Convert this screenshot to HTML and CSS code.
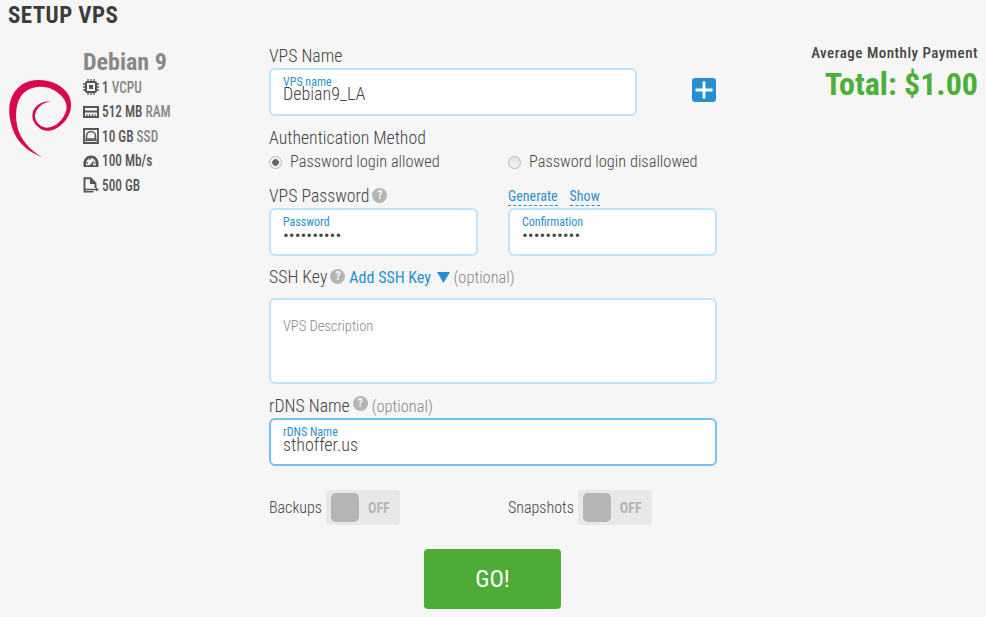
FILE: index.html
```html
<!DOCTYPE html>
<html lang="en">
<head>
  <meta charset="UTF-8" />
  <title>Setup VPS</title>
  <link rel="stylesheet" href="styles.css">
</head>
<body>
  <h1 class="page-title">SETUP VPS</h1>
  <div class="setup">
    <div class="os">
      <svg class="os-logo" viewBox="0 0 210 264" width="70" height="88">
        <path fill="#d70751" d="M112 246C80 236 45 212 28 175C12 135 6 95 22 62C38 32 65 15 100 15C140 15 175 32 192 62C204 88 198 118 178 140C160 160 140 170 122 167C100 162 82 142 82 122C82 98 105 78 135 80C115 82 92 98 90 122C90 142 108 158 128 158C152 156 176 135 184 105C190 78 165 50 130 38C100 30 70 38 52 58C34 80 30 115 36 150C44 195 80 230 112 246Z"/>
      </svg>
      <div class="os-info">
        <div class="os-name">Debian 9</div>
        <ul class="specs">
          <li>
            <svg class="spec-icon" viewBox="0 0 16 16"><rect x="3" y="3" width="10" height="10" rx="1" fill="none" stroke="#555" stroke-width="2"/><rect x="6" y="6" width="4" height="4" fill="#555"/><path d="M5 0v3M8 0v3M11 0v3M5 13v3M8 13v3M11 13v3M0 5h3M0 8h3M0 11h3M13 5h3M13 8h3M13 11h3" stroke="#555" stroke-width="1.300"/></svg>
            <span class="spec-text">1 <em>VCPU</em></span>
          </li>
          <li>
            <svg class="spec-icon" viewBox="0 0 16 16"><path d="M1 3h14v10H1z" fill="none" stroke="#555" stroke-width="2"/><path d="M1 7.500h14" stroke="#555" stroke-width="2"/><path d="M4 10v3M6.700 10v3M9.400 10v3M12 10v3" stroke="#555" stroke-width="1.100"/></svg>
            <span class="spec-text">512 MB <em>RAM</em></span>
          </li>
          <li>
            <svg class="spec-icon" viewBox="0 0 16 16"><path d="M1 1h14v14H1z" fill="none" stroke="#555" stroke-width="1.800"/><path d="M3.500 11V8a4.500 4.500 0 0 1 9 0v3z" fill="none" stroke="#555" stroke-width="1.500"/><path d="M1 12.300h14" stroke="#555" stroke-width="1.500"/></svg>
            <span class="spec-text">10 GB <em>SSD</em></span>
          </li>
          <li>
            <svg class="spec-icon" viewBox="0 0 16 16"><path d="M.8 14C-1 7.500 3 2.500 8 2.500S17 7.500 15.200 14z" fill="#555"/><path d="M3 12.300C2.800 8 5 5 8 5s5.200 3 5 7.300z" fill="#f6f6f6"/><path d="M5.500 14L11 7l-1.500 7z" fill="#555"/><path d="M3.500 9.500l1.500 1M12.500 9.500l-1.500 1M7 5v2" stroke="#555" stroke-width="1.300"/></svg>
            <span class="spec-text">100 Mb/s</span>
          </li>
          <li>
            <svg class="spec-icon" viewBox="0 0 16 16"><path d="M1.500 15.500V1.200h6l5 5V11" fill="none" stroke="#555" stroke-width="1.900"/><path d="M7 1v6h6z" fill="#555"/><path d="M1.500 12.500h12M1.500 14.800h9" stroke="#555" stroke-width="1.600"/><path d="M13 10.500l3 2-3 2z" fill="#555"/></svg>
            <span class="spec-text">500 GB</span>
          </li>
        </ul>
      </div>
    </div>

    <form class="vps-form">
      <div class="form-label">VPS Name</div>
      <div class="name-row">
        <label class="field field-name">
          <span class="field-label">VPS name</span>
          <input type="text" value="Debian9_LA">
        </label>
        <button type="button" class="add-btn" aria-label="Add">
          <svg viewBox="0 0 24 24" width="24" height="24"><path d="M12 3.500v17M3.500 12h17" stroke="#fff" stroke-width="2.800"/></svg>
        </button>
      </div>

      <div class="form-label auth-label">Authentication Method</div>
      <div class="two-col radios">
        <label class="radio"><span class="radio-dot checked"></span>Password login allowed</label>
        <label class="radio"><span class="radio-dot"></span>Password login disallowed</label>
      </div>

      <div class="two-col pass-head">
        <div class="form-label">VPS Password <span class="help">?</span></div>
        <div class="pass-links"><a href="#">Generate</a><a href="#">Show</a></div>
      </div>
      <div class="two-col">
        <label class="field">
          <span class="field-label">Password</span>
          <input type="password" value="1234567890">
        </label>
        <label class="field">
          <span class="field-label">Confirmation</span>
          <input type="password" value="1234567890">
        </label>
      </div>

      <div class="form-label ssh-label">SSH Key <span class="help">?</span> <a href="#" class="add-key">Add SSH Key <svg class="arrow" viewBox="0 0 13 11" width="13" height="11"><path d="M0 0h13L6.500 11z" fill="#2490d2"/></svg></a> <span class="optional">(optional)</span></div>
      <div class="description">VPS Description</div>

      <div class="form-label rdns-label">rDNS Name <span class="help help-raised">?</span> <span class="optional">(optional)</span></div>
      <label class="field field-focus">
        <span class="field-label">rDNS Name</span>
        <input type="text" value="sthoffer.us">
      </label>

      <div class="two-col toggles">
        <div class="toggle-row">Backups <span class="toggle"><span class="knob"></span><span class="off">OFF</span></span></div>
        <div class="toggle-row">Snapshots <span class="toggle"><span class="knob"></span><span class="off">OFF</span></span></div>
      </div>

      <div class="go-row"><button type="button" class="go-btn">GO!</button></div>
    </form>

    <div class="price">
      <div class="price-label">Average Monthly Payment</div>
      <div class="price-total">Total: $1.00</div>
    </div>
  </div>
</body>
</html>
```

FILE: styles.css
```css
* {
  box-sizing: border-box;
}
body {
  margin: 0;
  padding: 0 8px;
  height: 617px;
  overflow: hidden;
  background-color: #f6f6f6;
  color: #444;
  font-family: Roboto, sans-serif;
  font-stretch: 75%;
}
.page-title {
  margin: 0;
  padding-top: 3px;
  font-size: 23px;
  line-height: 26px;
  letter-spacing: 0.4px;
  font-weight: 700;
  color: #3c3c3c;
}
.setup {
  display: flex;
  margin-top: 18px;
}
.os {
  display: flex;
  width: 261px;
  flex: none;
}
.os-logo {
  margin: 28px 8px 0 -3px;
  flex: none;
}
.os-info {
  padding-top: 2px;
}
.os-name {
  font-size: 24px;
  line-height: 26px;
  font-weight: 700;
  color: #888;
}
.specs {
  list-style: none;
  margin: 0;
  padding: 0;
}
.specs li {
  display: flex;
  align-items: center;
  gap: 3px;
  height: 24.5px;
  font-size: 16px;
  font-weight: 500;
  color: #555;
}
.spec-text {
  white-space: nowrap;
  transform: scaleX(0.83);
  transform-origin: left center;
}
.specs em {
  font-style: normal;
  color: #888;
}
.spec-icon {
  width: 16px;
  height: 16px;
  flex: none;
}
.vps-form {
  width: 448px;
  flex: none;
  margin-top: -1px;
}
.form-label {
  font-size: 17.800px;
  line-height: 20px;
  font-weight: 300;
  color: #444;
}
.name-row {
  display: flex;
  justify-content: space-between;
  align-items: center;
  margin-top: 2px;
}
.field {
  display: block;
  height: 48px;
  padding: 7px 12px 0;
  background: #fff;
  border: 2px solid #bfe3fb;
  border-radius: 6px;
}
.field-name {
  width: 368px;
}
.field-name input {
  margin-top: -6px;
}
.field-focus {
  margin-top: 1px;
  border-color: #74c0f1;
}
.field-label {
  display: block;
  font-size: 12px;
  line-height: 11px;
  color: #2e8fcb;
}
.field input {
  display: block;
  width: 100%;
  height: 22px;
  padding: 0;
  border: 0;
  outline: 0;
  background: none;
  font: inherit;
  font-size: 18px;
  font-weight: 300;
  color: #444;
}
.field:not(.field-name) input {
  margin-top: -4px;
}
.field-focus:not(.field-name) input {
  margin-top: -5px;
}
.add-btn {
  width: 24px;
  height: 24px;
  margin: 0 1px 4px 0;
  padding: 0;
  border: 0;
  border-radius: 3px;
  background: #2490d2;
}
.add-btn svg {
  display: block;
}
.auth-label {
  margin-top: 12px;
}
.two-col {
  display: grid;
  grid-template-columns: 209px 209px;
  column-gap: 30px;
}
.radios {
  margin-top: 3px;
}
.radio {
  display: flex;
  align-items: center;
  gap: 8px;
  font-size: 16.400px;
  line-height: 22px;
  font-weight: 300;
  color: #444;
}
.radio-dot {
  width: 13px;
  height: 13px;
  border-radius: 50%;
  border: 1px solid #bbb;
  background: linear-gradient(#e2e2e2, #f4f4f4);
}
.radio-dot.checked {
  background: radial-gradient(circle, #666 0 3px, #f2f2f2 3.5px);
}
.pass-head {
  margin-top: 13px;
  height: 22px;
}
.pass-links {
  display: flex;
  gap: 12px;
  align-items: flex-start;
  padding-top: 2px;
  font-size: 14px;
  font-weight: 400;
  line-height: 16px;
}
.pass-links a {
  height: 18px;
  color: #2e8fcb;
  text-decoration: none;
  border-bottom: 1px dashed #2e8fcb;
}
.help {
  display: inline-block;
  width: 15px;
  height: 15px;
  margin-left: -1px;
  border-radius: 50%;
  background: #b5b5b5;
  color: #f6f6f6;
  font-size: 12px;
  line-height: 15px;
  font-weight: 700;
  text-align: center;
  vertical-align: 3px;
}
.help-raised {
  vertical-align: 5px;
}
.ssh-label {
  margin-top: 11px;
}
.add-key {
  font-size: 16px;
  font-weight: 400;
  color: #2490d2;
  text-decoration: none;
}
.arrow {
  margin-left: 2px;
}
.optional {
  font-size: 16.400px;
  color: #888;
}
.description {
  height: 86px;
  margin-top: 10px;
  padding: 18px 12px 0;
  background: #fff;
  border: 2px solid #bfe3fb;
  border-radius: 6px;
  font-size: 14.500px;
  font-weight: 300;
  color: #888;
}
.rdns-label {
  margin-top: 12px;
}
.toggles {
  margin-top: 24px;
}
.toggle-row {
  display: flex;
  align-items: center;
  gap: 4px;
  font-size: 16px;
  font-weight: 300;
  color: #444;
}
.toggle {
  display: flex;
  align-items: center;
  width: 74px;
  height: 35px;
  padding-left: 5px;
  background: #e8e8e8;
  border-radius: 4px;
}
.knob {
  width: 28px;
  height: 29px;
  background: #b5b5b5;
  border-radius: 5px;
}
.off {
  margin-left: 9px;
  font-size: 14px;
  font-weight: 700;
  color: #b5b5b5;
}
.go-row {
  display: flex;
  justify-content: center;
  margin-top: 24px;
  padding-right: 1px;
}
.go-btn {
  width: 137px;
  height: 60px;
  border: 0;
  border-radius: 4px;
  background: #4dac37;
  color: #fff;
  font: inherit;
  font-size: 24px;
  font-weight: 450;
}
.price {
  flex: 1;
  text-align: right;
  margin-top: -4px;
}
.price-label {
  font-size: 15px;
  line-height: 20px;
  letter-spacing: 0.5px;
  font-weight: 500;
  color: #444;
}
.price-total {
  margin-top: 2px;
  font-size: 32px;
  line-height: 38px;
  font-weight: 700;
  color: #4caf37;
}
```
